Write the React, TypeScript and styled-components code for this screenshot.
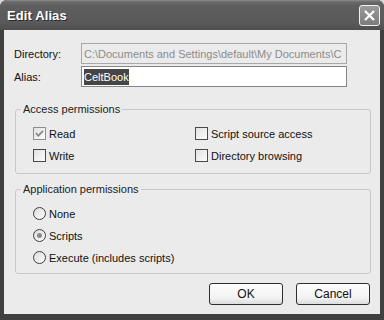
import styled, { createGlobalStyle } from 'styled-components';

const Global = createGlobalStyle`
  html, body {
    margin: 0;
    padding: 0;
    background: #d8d8d8;
  }
  body {
    font-family: "Liberation Sans", Arial, sans-serif;
    font-size: 11px;
    color: #111;
  }
`;

const Window = styled.div`
  width: 384px;
  height: 320px;
  box-sizing: border-box;
  background: #404040;
  border-radius: 7px 7px 0 0;
  display: flex;
  flex-direction: column;
  overflow: hidden;
`;

const TitleBar = styled.div`
  height: 30px;
  flex: none;
  display: flex;
  align-items: center;
  justify-content: space-between;
  padding: 0 4px 0 7px;
  background: linear-gradient(#8a8a8a 0px, #6a6a6a 2px, #5e5e5e 6px, #5a5a5a 22px, #4e4e4e 30px);
`;

const Title = styled.span`
  color: #fff;
  font-weight: bold;
  font-size: 13px;
  letter-spacing: 0.1px;
  text-shadow: 1px 1px 0 #2a2a2a;
`;

const CloseButton = styled.div`
  width: 21px;
  height: 21px;
  box-sizing: border-box;
  border: 1px solid #f2f2f2;
  border-radius: 3px;
  background: linear-gradient(#9a9a9a, #7c7c7c);
  display: flex;
  align-items: center;
  justify-content: center;
`;

const Client = styled.div`
  flex: 1;
  margin: 0 4px 6px 4px;
  background: #ebebeb;
  padding: 13px 9px 0 10px;
  display: flex;
  flex-direction: column;
`;

const FieldRow = styled.div`
  display: flex;
  align-items: center;
  height: 21px;
  margin-bottom: 2px;
`;

const Label = styled.span`
  width: 67px;
  flex: none;
`;

const TextBox = styled.div<{ $disabled?: boolean }>`
  width: 266px;
  height: 100%;
  box-sizing: border-box;
  border: 1px solid ${(p) => (p.$disabled ? '#a8a8a8' : '#858585')};
  background: ${(p) => (p.$disabled ? '#ebebeb' : '#fff')};
  color: ${(p) => (p.$disabled ? '#8c8c8c' : '#111')};
  padding: 0 2px;
  display: flex;
  align-items: center;
  white-space: nowrap;
  overflow: hidden;
`;

const Selected = styled.span`
  background: #454545;
  color: #fff;
  padding: 2px 0;
`;

const Group = styled.fieldset<{ $bottom: number }>`
  margin: 0 0 0 1px;
  padding: 12px 0 ${(p) => p.$bottom}px 17px;
  border: 1px solid #c8c8c8;
  border-radius: 3px;
  display: grid;
  row-gap: 9px;
`;

const Legend = styled.legend`
  margin-left: -12px;
  padding: 0 2px;
  color: #222;
`;

const CheckGrid = styled.div`
  display: grid;
  grid-template-columns: 162px 1fr;
  row-gap: 9px;
`;

const Option = styled.label`
  display: flex;
  align-items: center;
  gap: 3px;
  height: 13px;
`;

const Box = styled.span<{ $soft?: boolean }>`
  width: 13px;
  height: 13px;
  box-sizing: border-box;
  border: 1px solid ${(p) => (p.$soft ? '#8e8e8e' : '#4a4a4a')};
  background: linear-gradient(135deg, #e2e2e2, #fbfbfb);
  display: flex;
  align-items: center;
  justify-content: center;
`;

const Round = styled.span`
  width: 13px;
  height: 13px;
  box-sizing: border-box;
  border-radius: 50%;
  border: 1px solid #3e3e3e;
  background: linear-gradient(135deg, #dcdcdc, #fdfdfd);
  display: flex;
  align-items: center;
  justify-content: center;
`;

const Dot = styled.span`
  width: 5px;
  height: 5px;
  border-radius: 50%;
  background: #8a8a8a;
`;

const Spacer = styled.div<{ $h: number }>`
  height: ${(p) => p.$h}px;
  flex: none;
`;

const ButtonRow = styled.div`
  display: flex;
  justify-content: flex-end;
  gap: 13px;
  padding-right: 1px;
`;

const Button = styled.div`
  width: 74px;
  height: 22px;
  box-sizing: border-box;
  border: 1px solid #2e2e2e;
  border-radius: 3px;
  background: linear-gradient(#fdfdfd, #f2f2f2 70%, #dcdcdc);
  display: flex;
  align-items: center;
  justify-content: center;
  font-size: 12px;
`;

function Check({ label, checked }: { label: string; checked?: boolean }) {
  return (
    <Option>
      <Box $soft={checked}>
        {checked && (
          <svg width="9" height="9" viewBox="0 0 9 9">
            <path d="M1 4.2 L3.4 6.6 L8 1.8" fill="none" stroke="#8a8a8a" strokeWidth="1.8" />
          </svg>
        )}
      </Box>
      {label}
    </Option>
  );
}

function Radio({ label, checked }: { label: string; checked?: boolean }) {
  return (
    <Option>
      <Round>{checked && <Dot />}</Round>
      {label}
    </Option>
  );
}

export default function App() {
  return (
    <>
      <Global />
      <Window>
        <TitleBar>
          <Title>Edit Alias</Title>
          <CloseButton>
            <svg width="13" height="13" viewBox="0 0 13 13">
              <path d="M2 2 L11 11 M11 2 L2 11" stroke="#fff" strokeWidth="2.2" />
            </svg>
          </CloseButton>
        </TitleBar>
        <Client>
          <FieldRow>
            <Label>Directory:</Label>
            <TextBox $disabled>C:\Documents and Settings\default\My Documents\C</TextBox>
          </FieldRow>
          <FieldRow>
            <Label>Alias:</Label>
            <TextBox>
              <Selected>CeltBook</Selected>
            </TextBox>
          </FieldRow>
          <Spacer $h={14} />
          <Group $bottom={11}>
            <Legend>Access permissions</Legend>
            <CheckGrid>
              <Check label="Read" checked />
              <Check label="Script source access" />
              <Check label="Write" />
              <Check label="Directory browsing" />
            </CheckGrid>
          </Group>
          <Spacer $h={9} />
          <Group $bottom={9}>
            <Legend>Application permissions</Legend>
            <Radio label="None" />
            <Radio label="Scripts" checked />
            <Radio label="Execute (includes scripts)" />
          </Group>
          <Spacer $h={9} />
          <ButtonRow>
            <Button>OK</Button>
            <Button>Cancel</Button>
          </ButtonRow>
        </Client>
      </Window>
    </>
  );
}
